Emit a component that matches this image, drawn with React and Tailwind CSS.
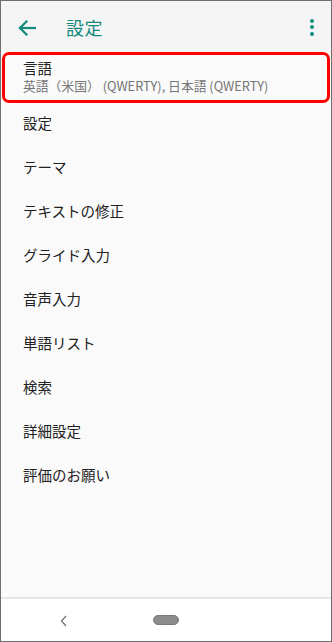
import React from 'react'

const items = ['設定', 'テーマ', 'テキストの修正', 'グライド入力', '音声入力', '単語リスト', '検索', '詳細設定', '評価のお願い']

const font = { fontFamily: '"Noto Sans CJK JP", "Noto Sans", Roboto, sans-serif' }

const App = () => {
  return (
    <div className="w-[332px] h-[642px] border border-[#6e6e6e] bg-[#fafafa] flex flex-col overflow-hidden" style={font}>
      {/* Toolbar */}
      <div className="h-[51px] shrink-0 bg-[#f5f5f5] flex items-center">
        <div className="w-[50px] flex justify-center pl-[2px] pt-[2px]">
          <svg width="18" height="16" viewBox="0 0 18 16" fill="none" stroke="#138a7b" strokeWidth="2.2" strokeLinecap="square">
            <path d="M2 8h15" />
            <path d="M8.5 1.5 2 8l6.5 6.5" />
          </svg>
        </div>
        <div className="ml-[15px] pt-[1px] text-[18px] leading-none text-[#138a7b] tracking-[0.5px]">設定</div>
        <div className="ml-auto mr-[17px] pt-[1px] flex flex-col gap-[2.5px]">
          <span className="w-[4px] h-[4px] rounded-full bg-[#138a7b]" />
          <span className="w-[4px] h-[4px] rounded-full bg-[#138a7b]" />
          <span className="w-[4px] h-[4px] rounded-full bg-[#138a7b]" />
        </div>
      </div>

      {/* List */}
      <div className="flex-1 flex flex-col">
        <div className="relative h-[49px] pl-[22px] flex flex-col justify-center">
          <div className="text-[14.5px] leading-[18px] text-[#212121]">言語</div>
          <div className="text-[12.8px] leading-[18px] text-[#757575]">英語（米国） (QWERTY), 日本語 (QWERTY)</div>
          <div className="absolute left-[1px] right-[1px] top-0 h-[51px] border-[3px] border-[#ff0000] rounded-[7px] pointer-events-none" />
        </div>
        {items.map((t) => (
          <div key={t} className="h-[44px] pl-[22px] flex items-center text-[14.5px] text-[#212121]">
            {t}
          </div>
        ))}
      </div>

      {/* Nav bar */}
      <div className="h-[44px] shrink-0 border-t-[2px] border-[#e6e6e6] bg-white flex items-center">
        <div className="w-[126px] flex justify-center pt-[1px]">
          <svg width="8" height="12" viewBox="0 0 8 12" fill="none" stroke="#6f6f6f" strokeWidth="1.2">
            <path d="M6 1 1.5 6 6 11" />
          </svg>
        </div>
        <div className="ml-[26px] w-[26px] h-[10px] rounded-full bg-[#8c8c8c] border border-[#7a7a7a]" />
      </div>
    </div>
  )
}

export default App
